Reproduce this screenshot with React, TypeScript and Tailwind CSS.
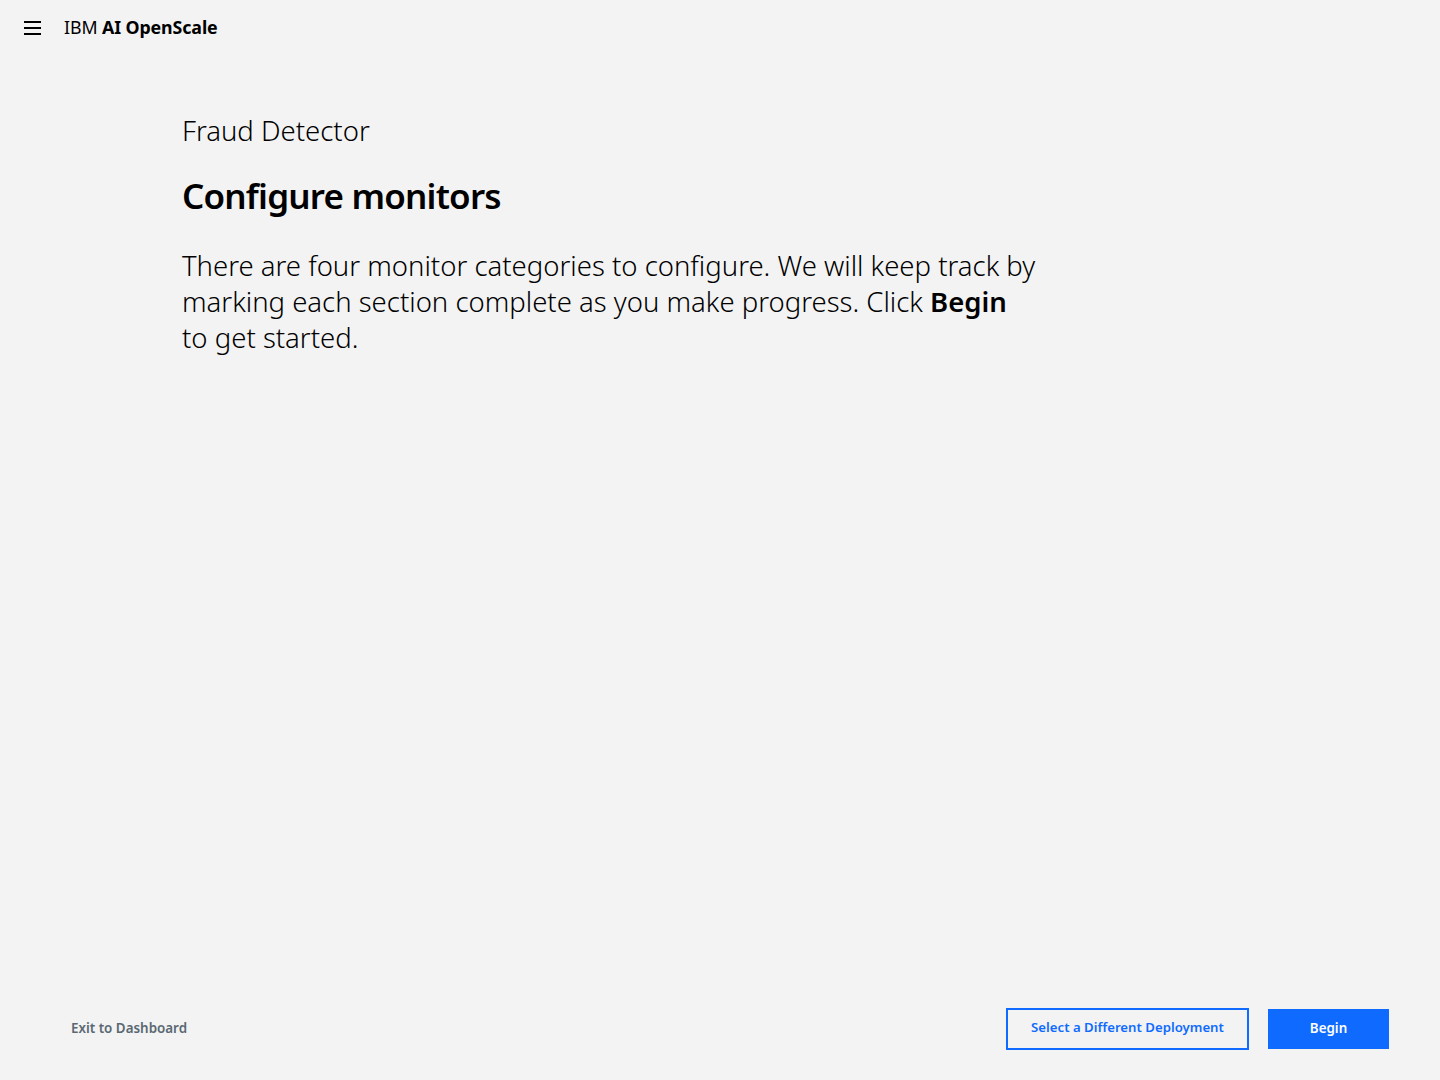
import React from "react";

export default function App() {
  return (
    <div
      className="w-[1440px] h-[1080px] bg-[#f3f3f3] text-black flex flex-col"
      style={{ fontFamily: '"Noto Sans", "Open Sans", sans-serif' }}
    >
      <header className="h-[56px] flex items-center shrink-0 pb-[2px]">
        <div className="w-[64px] flex justify-center pl-[1px] pt-[2px]">
          <svg width="18" height="16" viewBox="0 0 18 16" fill="#000">
            <rect x="0" y="1" width="17" height="2" />
            <rect x="0" y="7" width="17" height="2" />
            <rect x="0" y="13" width="17" height="2" />
          </svg>
        </div>
        <div className="text-[17.8px] tracking-[-0.1px]">
          IBM <span className="font-bold">AI OpenScale</span>
        </div>
      </header>

      <main className="flex-1 pl-[182px] pt-[57px]">
        <div className="text-[27.5px] leading-[36px] font-light">Fraud Detector</div>
        <h1 className="mt-[25px] text-[35px] leading-[44px] font-semibold tracking-[-0.8px]">
          Configure monitors
        </h1>
        <p className="mt-[30px] text-[27.5px] leading-[36px] font-light">
          There are four monitor categories to configure. We will keep track by
          <br />
          marking each section complete as you make progress. Click{" "}
          <span className="font-semibold">Begin</span>
          <br />
          to get started.
        </p>
      </main>

      <footer className="h-[100px] shrink-0 flex items-center pl-[71px] pr-[51px] pb-[2px]">
        <button className="text-[13.4px] font-semibold text-[#5a6872] mb-[2px]">Exit to Dashboard</button>
        <div className="ml-auto flex items-center gap-[19px]">
          <button className="w-[243px] h-[42px] border-2 border-[#0f6bff] text-[#0f6bff] text-[13.2px] font-semibold pb-[2px]">
            Select a Different Deployment
          </button>
          <button className="w-[121px] h-[40px] bg-[#0f6bff] text-white text-[13.4px] font-semibold pb-[2px]">
            Begin
          </button>
        </div>
      </footer>
    </div>
  );
}
